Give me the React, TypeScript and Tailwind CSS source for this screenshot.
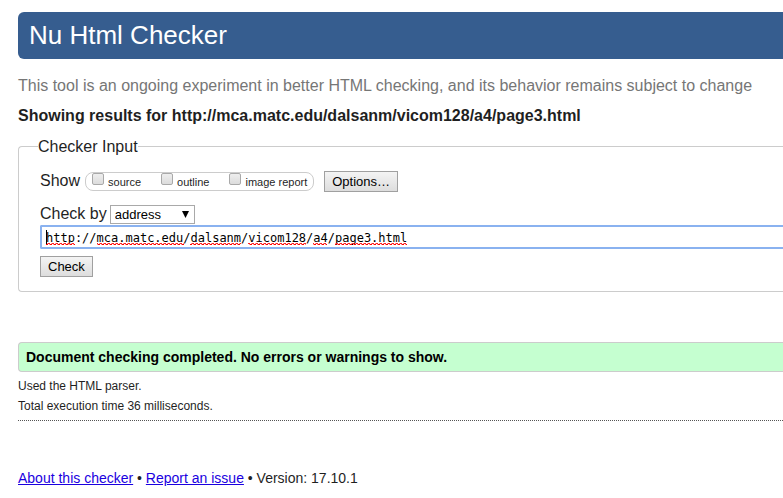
import { useState } from "react";

const CHAR = 7.224;

// Character ranges of the address that the spelling checker underlines.
const MISSPELLED: [number, number][] = [
  [0, 4],
  [7, 19],
  [20, 27],
  [28, 36],
  [37, 39],
  [40, 50],
];

function SpellingMarks() {
  return (
    <svg
      aria-hidden="true"
      shapeRendering="crispEdges"
      className="pointer-events-none absolute inset-0 h-full w-full"
    >
      <defs>
        <pattern id="wave" width="4" height="2" y="18" patternUnits="userSpaceOnUse">
          <rect x="0" y="0" width="2" height="1" fill="#ff2020" />
          <rect x="1" y="1" width="1" height="1" fill="#ff9090" />
          <rect x="2" y="1" width="2" height="1" fill="#ff0000" />
          <rect x="3" y="0" width="1" height="1" fill="#ff9090" />
        </pattern>
      </defs>
      {MISSPELLED.map(([start, end]) => (
        <rect
          key={start}
          x={6 + Math.round(start * CHAR)}
          y="18"
          width={Math.round((end - start) * CHAR)}
          height="2"
          fill="url(#wave)"
        />
      ))}
      <rect x="6" y="5" width="1" height="14" fill="#000" />
    </svg>
  );
}

function ShowOption({ id, label }: { id: string; label: string }) {
  return (
    <label htmlFor={id} className="flex items-start">
      <input
        id={id}
        type="checkbox"
        className="h-3 w-3 appearance-none rounded-xs border border-[#a9a9a9] bg-linear-to-b from-[#eeeeee] to-[#dcdcdc] checked:bg-[#8a8a8a]"
      />
      <span className="mt-px ml-1 text-[11px] leading-4">{label}</span>
    </label>
  );
}

const buttonClass =
  "border border-[#a0a0a0] bg-linear-to-b from-[#f4f4f4] to-[#dddddd] px-[7px] text-[13px] leading-[19px] text-black";

export default function App() {
  const [address, setAddress] = useState(
    "http://mca.matc.edu/dalsanm/vicom128/a4/page3.html"
  );

  return (
    <div className="overflow-hidden bg-white pt-3 pl-[18px] font-['Liberation_Sans',Arial,sans-serif] text-base text-[#1f1f1f]">
      <header className="rounded-l-md bg-[#365d8f] px-[11px] py-1">
        <h1 className="text-[26px] leading-[39px] text-white">Nu Html Checker</h1>
      </header>

      <main>
        <p className="mt-[15px] leading-6 text-[#767676]">
          This tool is an ongoing experiment in better HTML checking, and its behavior remains subject to change
        </p>
        <h2 className="mt-1.5 leading-6 font-bold">
          Showing results for http://mca.matc.edu/dalsanm/vicom128/a4/page3.html
        </h2>

        <form onSubmit={(event) => event.preventDefault()}>
          <fieldset className="mt-[7px] rounded-l border border-r-0 border-[#cccccc] pb-[13px] pl-[21px]">
            <legend className="-ml-0.5 pt-0.5 leading-5">Checker Input</legend>

            <div className="mt-3 flex items-center">
              <span className="leading-6">Show</span>
              <div className="ml-[5px] flex h-[19px] gap-5 rounded-lg border border-[#cccccc] px-1.5">
                <ShowOption id="source" label="source" />
                <ShowOption id="outline" label="outline" />
                <ShowOption id="image-report" label="image report" />
              </div>
              <button type="button" className={`${buttonClass} ml-2.5`}>
                Options…
              </button>
            </div>

            <div className="mt-2.5 flex items-center">
              <label htmlFor="check-by" className="leading-[22px]">
                Check by
              </label>
              <div className="relative ml-[3px]">
                <select
                  id="check-by"
                  className="block h-[19px] w-[85px] appearance-none border border-[#a9a9a9] bg-white px-1 pt-px text-[13px] leading-4 text-black"
                >
                  <option>address</option>
                  <option>file upload</option>
                  <option>text input</option>
                </select>
                <svg
                  aria-hidden="true"
                  viewBox="0 0 7 7"
                  className="pointer-events-none absolute top-1.5 right-1.5 h-[7px] w-[7px]"
                >
                  <path d="M0 0H7L3.5 7Z" fill="#000" />
                </svg>
              </div>
            </div>

            <div className="relative">
              <input
                type="text"
                aria-label="Address"
                spellCheck={false}
                value={address}
                onChange={(event) => setAddress(event.target.value)}
                className="block h-6 w-full rounded-l-xs border-2 border-r-0 border-[#8ab2f0] bg-white px-1 pt-0.5 font-['DejaVu_Sans_Mono',monospace] text-[12px] text-black outline-none"
              />
              <SpellingMarks />
            </div>

            <button type="submit" className={`${buttonClass} mt-[7px]`}>
              Check
            </button>
          </fieldset>
        </form>

        <section>
          <p className="mt-[50px] rounded-l-sm border border-r-0 border-[#cccccc] bg-[#c5ffd0] px-[7px] py-1 text-sm font-bold text-black">
            Document checking completed. No errors or warnings to show.
          </p>
          <div className="border-b border-dotted border-[#555555] pt-1 pb-1 text-[12px] leading-5">
            <p>Used the HTML parser.</p>
            <p>Total execution time 36 milliseconds.</p>
          </div>
        </section>
      </main>

      <footer className="mt-[47px] text-sm leading-5">
        <a href="#about" className="text-[#1a00e0] underline">About this checker</a>
        {" • "}
        <a href="#issue" className="text-[#1a00e0] underline">Report an issue</a>
        {" • "}Version: 17.10.1
      </footer>
    </div>
  );
}
